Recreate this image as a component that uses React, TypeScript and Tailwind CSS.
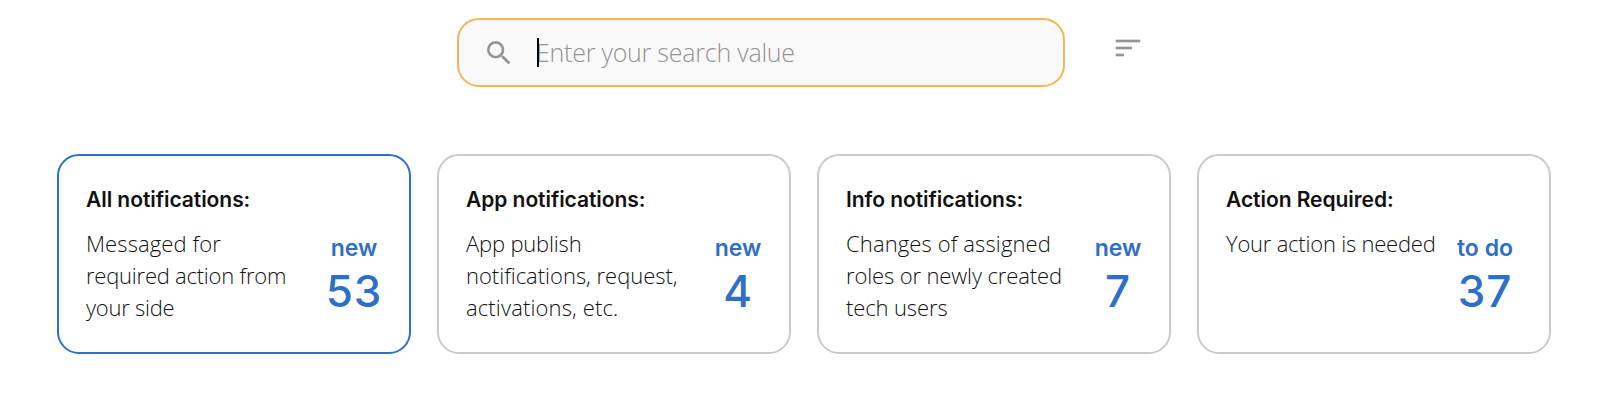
import { MdSearch } from "react-icons/md";

type Line = { text: string; tracking: string };

type Card = {
  title: string;
  lines: Line[];
  label: string;
  count: string;
  active?: boolean;
  statClass: string;
};

const cards: Card[] = [
  {
    title: "All notifications:",
    lines: [
      { text: "Messaged for", tracking: "tracking-[0.1px]" },
      { text: "required action from", tracking: "tracking-[-0.23px]" },
      { text: "your side", tracking: "tracking-[-0.26px]" },
    ],
    label: "new",
    count: "53",
    active: true,
    statClass: "mr-[28px]",
  },
  {
    title: "App notifications:",
    lines: [
      { text: "App publish", tracking: "tracking-[-0.18px]" },
      { text: "notifications, request,", tracking: "tracking-[-0.02px]" },
      { text: "activations, etc.", tracking: "tracking-[0.13px]" },
    ],
    label: "new",
    count: "4",
    statClass: "mr-[24px]",
  },
  {
    title: "Info notifications:",
    lines: [
      { text: "Changes of assigned", tracking: "tracking-[0.12px]" },
      { text: "roles or newly created", tracking: "tracking-[-0.13px]" },
      { text: "tech users", tracking: "tracking-[-0.12px]" },
    ],
    label: "new",
    count: "7",
    statClass: "mr-[24px]",
  },
  {
    title: "Action Required:",
    lines: [{ text: "Your action is needed", tracking: "tracking-[-0.22px]" }],
    label: "to do",
    count: "37",
    statClass: "mr-[37px]",
  },
];

function SortIcon() {
  return (
    <svg width="26" height="18" viewBox="0 0 26 18" fill="#939393">
      <rect x="0.75" y="0.7" width="24.5" height="2.6" />
      <rect x="0.75" y="7.7" width="16.25" height="2.6" />
      <rect x="0.75" y="14.7" width="8.25" height="2.6" />
    </svg>
  );
}

function NotificationCard({ card }: { card: Card }) {
  return (
    <section
      className={`flex h-[200px] flex-col rounded-[22px] border-2 pt-[29px] pl-[27px] ${
        card.active ? "border-[#2f6fc6]" : "border-[#cacaca]"
      }`}
    >
      <h2 className="font-['Inter',sans-serif] text-[21px] leading-[30px] font-semibold tracking-[-0.05px] whitespace-nowrap text-[#111]">
        {card.title}
      </h2>
      <div className="mt-[12px] flex justify-between">
        <p className="text-[22px] leading-[32px] font-[330] whitespace-nowrap text-[#111]">
          {card.lines.map((line) => (
            <span key={line.text} className={`block ${line.tracking}`}>
              {line.text}
            </span>
          ))}
        </p>
        <div
          className={`flex w-0 min-w-[54px] flex-col items-center pt-[6px] font-['Inter',sans-serif] whitespace-nowrap text-[#2f6fc6] ${card.statClass}`}
        >
          <span className="text-[23px] leading-[30px] font-semibold">{card.label}</span>
          <span className="mt-[2px] text-[44px] leading-[52px] font-[480] tracking-[0.8px]">
            {card.count}
          </span>
        </div>
      </div>
    </section>
  );
}

export default function App() {
  return (
    <main className="h-[400px] bg-white pt-[18px] font-['Open_Sans',sans-serif]">
      <div className="ml-[457px] flex items-start">
        <div className="flex h-[69px] w-[608px] items-center rounded-[22px] border-2 border-[#f2b755] bg-[#f9f9f9] pl-[24px]">
          <MdSearch size={32} className="text-[#939393]" />
          <span className="relative z-10 ml-[22px] h-[29px] w-[2px] bg-black" />
          <span className="-ml-[3px] pb-[2px] text-[25px] leading-[32px] font-[320] tracking-[-0.24px] text-[#939393]">
            Enter your search value
          </span>
        </div>
        <button className="mt-[21px] ml-[50px]" aria-label="Sort">
          <SortIcon />
        </button>
      </div>
      <div className="mt-[67px] ml-[57px] grid w-[1494px] grid-cols-4 gap-[26px]">
        {cards.map((card) => (
          <NotificationCard key={card.title} card={card} />
        ))}
      </div>
    </main>
  );
}
